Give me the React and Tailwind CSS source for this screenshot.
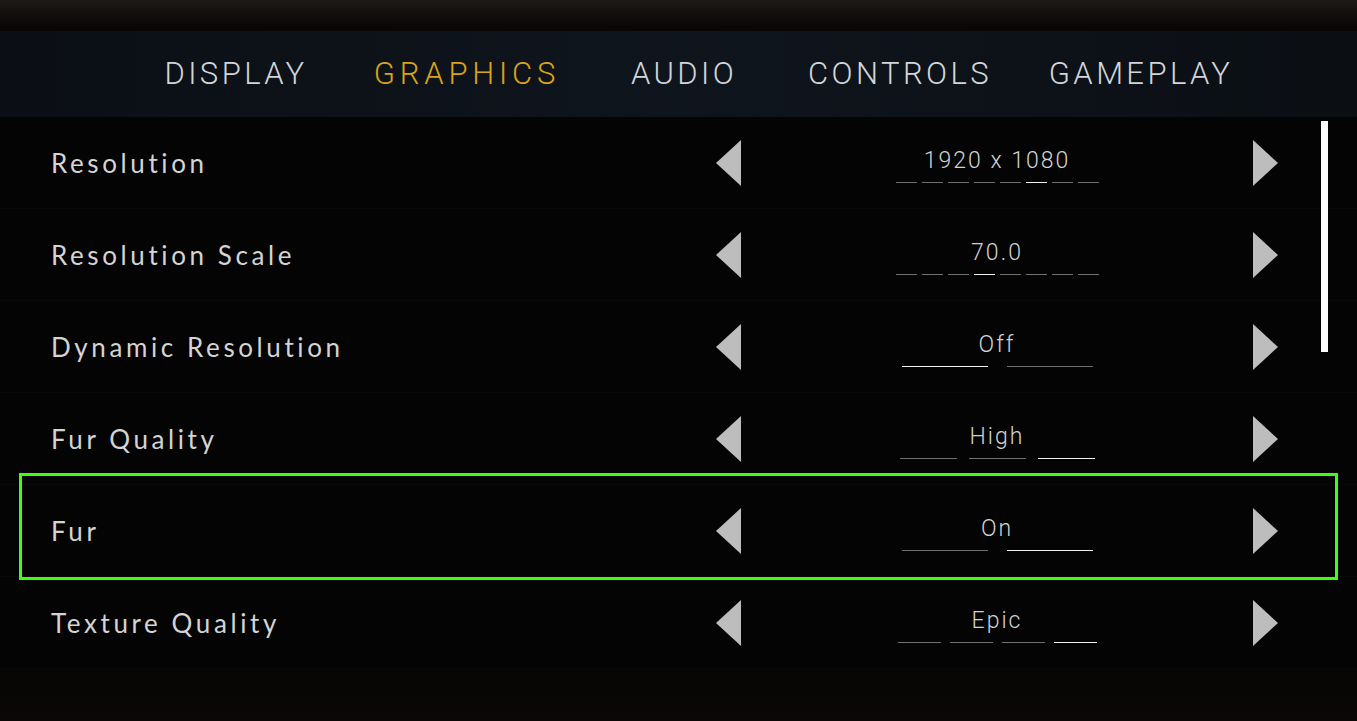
import React from "react";

const tabs = [
  { name: "DISPLAY", w: "w-[230px]", active: false },
  { name: "GRAPHICS", w: "w-[232px]", active: true },
  { name: "AUDIO", w: "w-[202px]", active: false },
  { name: "CONTROLS", w: "w-[230px]", active: false },
  { name: "GAMEPLAY", w: "w-[252px]", active: false },
];

const rows = [
  { label: "Resolution", value: "1920 x 1080", segs: 8, active: 5, segW: "w-[21px]", gap: "gap-[5px]" },
  { label: "Resolution Scale", value: "70.0", segs: 8, active: 3, segW: "w-[21px]", gap: "gap-[5px]" },
  { label: "Dynamic Resolution", value: "Off", segs: 2, active: 0, segW: "w-[86px]", gap: "gap-[19px]" },
  { label: "Fur Quality", value: "High", segs: 3, active: 2, segW: "w-[57px]", gap: "gap-[12px]" },
  { label: "Fur", value: "On", segs: 2, active: 1, segW: "w-[86px]", gap: "gap-[19px]", highlight: true },
  { label: "Texture Quality", value: "Epic", segs: 4, active: 3, segW: "w-[43px]", gap: "gap-[9px]" },
];

function LeftArrow() {
  return (
    <svg width="25" height="46" viewBox="0 0 25 46" className="block">
      <polygon points="25,0 25,46 0,23" fill="#bdbdbd" />
    </svg>
  );
}

function RightArrow() {
  return (
    <svg width="25" height="46" viewBox="0 0 25 46" className="block">
      <polygon points="0,0 0,46 25,23" fill="#bdbdbd" />
    </svg>
  );
}

function Row({ r }) {
  return (
    <div className="relative flex h-[92px] items-center border-b border-[#080808]">
      {r.highlight && (
        <div className="pointer-events-none absolute left-[19px] right-[19px] top-[-12px] bottom-[-4px] border-[3px] border-[#3cff14]" />
      )}
      <div
        className="flex-1 pl-[51px] pt-[2px] text-[26px] tracking-[3.6px] text-[#d4d4d4]"
        style={{ fontFamily: "Lato, 'Noto Sans', sans-serif" }}
      >
        {r.label}
      </div>
      <div className="flex w-[562px] items-center justify-between">
        <LeftArrow />
        <div className="flex flex-col items-center pt-[6px]">
          <div
            className="text-[23px] font-light leading-[26px] tracking-[2px] text-[#d2d2d2]"
            style={{ fontFamily: "Roboto, 'Liberation Sans', sans-serif" }}
          >
            {r.value}
          </div>
          <div className={`mt-[8px] flex ${r.gap}`}>
            {Array.from({ length: r.segs }).map((_, i) => (
              <div
                key={i}
                className={`${r.segW} h-[1.5px] ${i === r.active ? "bg-[#f2f2f2]" : "bg-[#6f6f6f]"}`}
              />
            ))}
          </div>
        </div>
        <RightArrow />
      </div>
      <div className="w-[79px]" />
    </div>
  );
}

export default function App() {
  return (
    <div className="relative h-[721px] w-[1357px] overflow-hidden bg-[#040404]">
      <div className="h-[31px] bg-gradient-to-b from-[#1e1a18] via-[#100d0c] to-[#070605]" />
      <div className="flex h-[86px] items-center bg-gradient-to-r from-[#0b0f15] via-[#0f151d] to-[#0b0f14] pl-[121px]">
        {tabs.map((t) => (
          <div
            key={t.name}
            className={`${t.w} text-center text-[31px] font-light ${t.name === "GRAPHICS" ? "tracking-[4.8px]" : "tracking-[3.4px]"} ${t.active ? "text-[#d9a418]" : "text-[#d2d6da]"}`}
            style={{ fontFamily: "Roboto, 'Liberation Sans', sans-serif" }}
          >
            {t.name}
          </div>
        ))}
      </div>
      <div className="relative">
        {rows.map((r) => (
          <Row key={r.label} r={r} />
        ))}
        <div className="absolute left-[1321px] top-[4px] h-[231px] w-[7px] bg-white" />
      </div>
      <div className="h-[60px] bg-gradient-to-b from-[#070504] to-[#0b0807]" />
    </div>
  );
}
